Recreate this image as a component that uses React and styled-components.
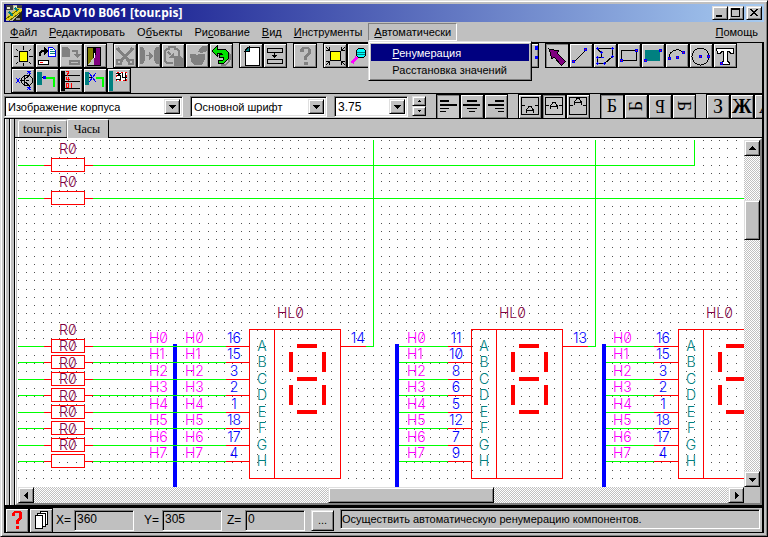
import React from "react";
import styled, { createGlobalStyle, css } from "styled-components";

const face = "#c0c0c0";
const shade = "#808080";
const uiFont = '"Liberation Sans", Arial, sans-serif';

const GlobalStyle = createGlobalStyle`
  *, *::before, *::after { box-sizing: border-box; }
  html, body, #root { height: 100%; margin: 0; }
  body { overflow: hidden; background: ${face}; }
  button, input, select { font: inherit; color: inherit; margin: 0; border-radius: 0; }
`;

const raised = css`
  border: 1px solid;
  border-color: #dfdfdf #000 #000 #dfdfdf;
  box-shadow: inset 1px 1px #fff, inset -1px -1px ${shade};
`;

const Window = styled.div`
  ${raised}
  display: flex;
  flex-direction: column;
  height: 100vh;
  padding: 3px;
  overflow: hidden;
  background: ${face};
  color: #000;
  font: 11px/16px ${uiFont};
`;

const TitleBar = styled.header`
  display: flex;
  align-items: center;
  flex: none;
  height: 18px;
  padding: 0 2px 0 2px;
  gap: 3px;
  background: linear-gradient(90deg, #000080, #a6caf0);
  color: #fff;
`;

const Title = styled.h1`
  flex: 1;
  margin: 0;
  font: bold 12px/18px "Noto Sans", "Open Sans", sans-serif;
  white-space: nowrap;
`;

const WindowButtons = styled.div`
  display: flex;
`;

const CaptionButton = styled.button`
  ${raised}
  width: 16px;
  height: 14px;
  padding: 0;
  margin-left: ${(p) => (p.$apart ? "2px" : "0")};
  background: ${face};
  color: #000;
  svg { display: block; width: 12px; height: 10px; margin: 1px; }
`;

const MenuBar = styled.nav`
  display: flex;
  flex: none;
  align-items: center;
  height: 20px;
`;

const MenuEntry = styled.div`
  position: relative;
  margin-left: ${(p) => (p.$last ? "auto" : "0")};
`;

const MenuButton = styled.button`
  display: block;
  height: 18px;
  padding: 0 5px;
  border: 1px solid;
  border-color: ${(p) => (p.$open ? "#808080 #fff #fff #808080" : "transparent")};
  background: none;
  line-height: 16px;
  white-space: nowrap;
`;

const DropDown = styled.div`
  ${raised}
  position: absolute;
  z-index: 5;
  top: 18px;
  left: 0;
  width: 164px;
  padding: 2px;
  background: ${face};
`;

const DropItem = styled.button`
  display: block;
  width: 100%;
  height: 17px;
  padding: 0 0 0 21px;
  border: 0;
  background: ${(p) => (p.$active ? "#000080" : "transparent")};
  color: ${(p) => (p.$active ? "#fff" : "#000")};
  line-height: 16px;
  text-align: left;
  white-space: nowrap;
`;

const ToolPanel = styled.div`
  flex: none;
  padding-left: 6px;
  border: 1px solid #000;
  border-right-width: 2px;
  overflow: hidden;
`;

const ToolRow = styled.div`
  display: flex;
  gap: 6px;
  height: 25px;
`;

const ToolGroup = styled.div`
  display: flex;
  flex: none;
`;

const ToolButton = styled.button`
  flex: none;
  width: 24px;
  height: 25px;
  padding: 0;
  border: 1px solid #000;
  background: ${(p) => (p.$pressed ? "#c8c8c8" : face)};
  box-shadow: ${(p) =>
    p.$pressed ? "inset 1px 1px #808080" : "inset 1px 1px #fff, inset -1px -1px #808080"};
  svg { display: block; width: 22px; height: 22px; }
`;

const FormatBar = styled.div`
  display: flex;
  flex: none;
  align-items: center;
  height: 25px;
  border-bottom: 1px solid #000;
  border-right: 2px solid #000;
  overflow: hidden;
`;

const FormatTools = styled.div`
  display: flex;
  gap: 10px;
  margin-left: 10px;
`;

const Combo = styled.div`
  display: flex;
  flex: none;
  width: ${(p) => p.$width}px;
  height: 21px;
  margin-right: ${(p) => p.$gap}px;
  border: 1px solid;
  border-color: #808080 #fff #fff #808080;
  box-shadow: inset 1px 1px #000, inset -1px -1px #dfdfdf;
  padding: 2px;
  background: #fff;
`;

const ComboSelect = styled.select`
  flex: 1;
  min-width: 0;
  padding: 0 1px;
  border: 0;
  appearance: none;
  background: #fff;
  font-size: ${(p) => (p.$numeric ? 12 : 11)}px;
  line-height: 16px;
  outline: 0;
`;

const ComboArrow = styled.span`
  ${raised}
  display: flex;
  align-items: center;
  justify-content: center;
  flex: none;
  width: 16px;
  background: ${face};
`;

const Spinner = styled.div`
  display: flex;
  flex: none;
  flex-direction: column;
  width: 14px;
`;

const SpinButton = styled.button`
  ${raised}
  display: flex;
  align-items: center;
  justify-content: center;
  height: 10px;
  padding: 0;
  background: ${face};
`;

const Workspace = styled.main`
  display: flex;
  flex: 1;
  min-height: 0;
  border-right: 2px solid #000;
  border-bottom: 3px solid #000;
`;

const Strip = styled.div`
  flex: none;
  width: 5px;
  border-left: 1px solid #000;
  box-shadow: inset 1px 0 #fff;
`;

const Document = styled.section`
  display: flex;
  flex: 1;
  flex-direction: column;
  min-width: 0;
  border-left: 1px solid #000;
`;

const TabRow = styled.div`
  display: flex;
  flex: none;
  align-items: flex-end;
  height: 19px;
  padding-left: 3px;
  border-bottom: 1px solid #000;
`;

const Tab = styled.button`
  height: ${(p) => (p.$active ? 19 : 17)}px;
  margin-bottom: ${(p) => (p.$active ? "-1px" : "0")};
  padding: 0 ${(p) => (p.$active ? 8 : 4)}px 0 ${(p) => (p.$active ? 6 : 4)}px;
  border: 1px solid;
  border-color: #fff ${(p) => (p.$active ? "#000" : "#808080")} ${face} #fff;
  border-bottom: 0;
  border-radius: 2px 2px 0 0;
  background: ${face};
  font: ${(p) => (p.$active ? 12 : 13)}px/16px "Liberation Serif", serif;
`;

const Sheet = styled.div`
  display: grid;
  flex: 1;
  grid-template: minmax(0, 1fr) 16px / minmax(0, 1fr) 16px;
  min-height: 0;
  border: 2px solid;
  border-color: #fff #808080 #808080 #fff;
  border-left: 3px double #fff;
`;

const Drawing = styled.svg`
  display: block;
  width: 100%;
  height: 100%;
  background: #fff;
  font: 300 14px/16px Inter, sans-serif;
  font-feature-settings: "zero";
`;

const ScrollBar = styled.div`
  display: flex;
  flex-direction: ${(p) => (p.$vertical ? "column" : "row")};
  background: repeating-conic-gradient(#fff 0 25%, #c0c0c0 0 50%) 0 0 / 2px 2px;
`;

const ScrollButton = styled.button`
  ${raised}
  display: flex;
  align-items: center;
  justify-content: center;
  flex: none;
  width: 16px;
  height: 16px;
  padding: 0;
  background: ${face};
`;

const Track = styled.div`
  flex: ${(p) => p.$part} 0 0;
`;

const Thumb = styled.div`
  ${raised}
  flex: ${(p) => p.$part} 0 0;
  background: ${face};
`;

const StatusBar = styled.footer`
  display: flex;
  flex: none;
  align-items: center;
  height: 25px;
  padding-right: 2px;
  border-left: 1px solid #000;
  border-bottom: 1px solid #000;
  border-right: 2px solid #000;
`;

const Coordinate = styled.div`
  display: flex;
  flex: none;
  align-items: center;
  margin-left: ${(p) => p.$gap}px;
`;

const CoordLabel = styled.label`
  width: 18px;
  line-height: 16px;
  font-size: 12px;
`;

const CoordInput = styled.input`
  width: 60px;
  height: 21px;
  padding: 0 1px 2px 2px;
  border: 1px solid;
  border-color: #808080 #fff #fff #808080;
  box-shadow: inset 1px 1px #000;
  background: ${face};
  font-size: 12px;
  outline: 0;
`;

const MoreButton = styled.button`
  ${raised}
  flex: none;
  width: 23px;
  height: 21px;
  margin-left: 6px;
  padding: 0;
  background: ${face};
`;

const Hint = styled.output`
  flex: 1;
  min-width: 0;
  height: 20px;
  margin: 0 0 2px 6px;
  padding-left: 1px;
  border: 1px solid;
  border-color: #808080 #fff #fff #808080;
  box-shadow: inset 1px 1px #000;
  overflow: hidden;
  line-height: 18px;
  white-space: nowrap;
`;

/* ---------- small glyphs ---------- */

const arrowPaths = {
  down: "M0 2h7v1h-1v1h-1v1h-1v1h-1v-1h-1v-1h-1v-1h-1z",
  up: "M3 1h1v1h1v1h1v1h1v1h-7v-1h1v-1h1v-1h1z",
  left: "M5 0v7h-1v-1h-1v-1h-1v-1h-1v-1h1v-1h1v-1h1v-1z",
  right: "M2 0v7h1v-1h1v-1h1v-1h1v-1h-1v-1h-1v-1h-1v-1z",
};

const Arrow = ({ to }) => (
  <svg width="7" height="7" viewBox="0 0 7 7" shapeRendering="crispEdges" aria-hidden="true">
    <path d={arrowPaths[to]} />
  </svg>
);

const SpinArrow = ({ up }) => (
  <svg width="3" height="2" viewBox="0 0 3 2" shapeRendering="crispEdges" aria-hidden="true">
    <path d={up ? "M1 0h1v1h1v1h-3v-1h1z" : "M0 0h3v1h-1v1h-1v-1h-1z"} />
  </svg>
);

const AppIcon = () => (
  <svg width="16" height="16" viewBox="0 0 16 16" shapeRendering="crispEdges" aria-hidden="true">
    <rect width="16" height="16" fill="#b8b8a0" />
    <path d="M0 0h7v5h-7zM11 0h5v3h-5z" fill="#404040" />
    <path d="M1 2h3v2h-3zM8 1h3v3h-3z" fill="#e8e8d0" />
    <path d="M6 16h10v-9z" fill="#202018" />
    <path d="M0 12L12 3l4 1v2L4 15H0z" fill="#e0d020" />
    <path d="M0 14L13 4M3 16L16 6" stroke="#606000" fill="none" />
    <path d="M3 7l4 4M9 3l3 3" stroke="#008080" strokeWidth="2" />
    <path d="M10 13h4v2h-4z" fill="#909090" />
  </svg>
);

const Node = ({ x, y }) => (
  <g>
    <rect x={x} y={y} width="3" height="3" fill="#00f" />
    <rect x={x + 1} y={y + 1} width="1" height="1" fill="#f00" />
  </g>
);

const line = (color, width = 1) => ({ fill: "none", stroke: color, strokeWidth: width });

const glyphs = {
  light: (
    <>
      <rect x="8.500" y="7.500" width="8" height="10" fill="#ff0" stroke="#000" />
      <path d="M12.500 2v4M12.500 19v3M3 12.500h4M18 12.500h4M5 5l2 2M20 5l-2 2M5 20l2-2M20 20l-2-2" {...line("#000")} />
    </>
  ),
  load: (
    <>
      <path d="M5 12V9l2-2h3" {...line("#000", 2)} />
      <path d="M9 3l4 4-4 4z" />
      <path d="M13.500 3.500h4l3 3v6h-7z" fill="#fff" stroke="#00f" />
      <path d="M15 5.500h3M15 7.500h5M15 9.500h5" {...line("#008080")} />
      <rect x="3.500" y="16.500" width="10" height="4" fill="#fff" stroke="#000" />
      <rect x="5" y="18" width="3" height="1" fill="#f00" />
    </>
  ),
  save: (
    <>
      <path d="M3 3h5l3 3v7h-8z" fill="#808080" />
      <path d="M13 6.500h4.500v5" {...line("#808080", 2)} />
      <path d="M14 10h8l-4 4z" fill="#808080" />
      <path d="M10 16h11v5h-11z" fill="#808080" />
      <rect x="12" y="18" width="7" height="1" fill="#c0c0c0" />
    </>
  ),
  exit: (
    <>
      <rect x="4.500" y="3.500" width="13" height="18" fill="#808000" stroke="#000" />
      <path d="M11 4h6v17h-6z" fill="#800080" />
      <path d="M10 4h3v6l-2 3v2h-1z" fill="#000" />
      <path d="M5 21l6-8v8z" fill="#c0c0c0" />
      <path d="M11.500 9v5" {...line("#fff")} />
    </>
  ),
  cut: (
    <>
      <path d="M4 4l12 13M20 4L8 17" {...line("#808080", 3)} />
      <circle cx="6" cy="18" r="2.500" {...line("#808080", 2)} />
      <circle cx="18" cy="18" r="2.500" {...line("#808080", 2)} />
    </>
  ),
  copy: (
    <>
      <path d="M3 3h3l2 4v9l-2 4h-3zM22 3h-3l-2 4v9l2 4h3z" fill="#808080" />
      <path d="M9 11.500h5" {...line("#808080")} />
      <path d="M12 8l4 4-4 4z" fill="#808080" />
    </>
  ),
  paste: (
    <>
      <path d="M12 19H6l-2-2V7l2-2h2V3h6v2h2l2 2v5" {...line("#808080", 2)} />
      <path d="M7 8l3 3" {...line("#808080", 2)} />
      <path d="M13 8v6h-6z" fill="#808080" />
      <path d="M13 12h6l3 3v7h-9z" fill="#808080" />
    </>
  ),
  remove: (
    <>
      <path d="M13 8l2-4 3-2h5v3l-3 3-4 1z" fill="#808080" />
      <path d="M5 10h5l2 1 2-1h6v5l-3 6h-8l-3-4z" fill="#808080" />
    </>
  ),
  undo: (
    <>
      <path d="M8 12h8l3 2v3l-3 3h-4v2h4l4-3 2-4v-4l-3-4-4-1" fill="#808080" />
      <path d="M3 7l5-5v3h8l3 3v7l-4 4h-6v-3h5l1-2-5-1v-3h3l-1-1h-4v3z" fill="#00e000" stroke="#000" />
    </>
  ),
  page: (
    <>
      <path d="M6 6l4-3h10v18h-14z" fill="#fff" stroke="#000" />
      <path d="M6 7l4-4v4z" fill="#008080" stroke="#000" />
    </>
  ),
  fit: (
    <>
      <rect x="4.500" y="4.500" width="15" height="4" {...line("#000")} />
      <rect x="4.500" y="15.500" width="15" height="4" {...line("#000")} />
      <path d="M11.500 9v5M9 11.500h5M10 12.500h3" {...line("#000")} />
    </>
  ),
  help: (
    <>
      <path d="M7 8V5l2-2h6l3 2v4l-4 4v3h-3v-4l4-4v-3h-4v3z" fill="#808080" />
      <rect x="11" y="18" width="4" height="3" fill="#808080" />
    </>
  ),
  extents: (
    <>
      <rect x="7.500" y="7.500" width="10" height="9" fill="#ff0" stroke="#000" />
      <path d="M3 3l4 4M22 3l-4 4M3 21l4-4M22 21l-4-4M3 6.500h3.500V3M22 6.500h-3.500V3M3 17.500h3.500V21M22 17.500h-3.500V21" {...line("#000")} />
    </>
  ),
  zoom: (
    <>
      <circle cx="14" cy="9" r="5" fill="#0ff" stroke="#000" />
      <path d="M10 8.500h8M10 10.500h8" {...line("#008080")} />
      <path d="M10 13l-5 6" {...line("#f0f", 3)} />
    </>
  ),
  flag: <path d="M20 2v4h3v-4zM20 12h3v3h-3z" fill="#00f" />,
  arrow: <path d="M4 5l10 2-2 2 8 8v1l-3 3h-1l-7-8-2 2z" fill="#800080" stroke="#000" />,
  line: (
    <>
      <path d="M5 18L17 6" {...line("#000")} />
      <Node x={3} y={16} />
      <Node x={15} y={4} />
    </>
  ),
  polygon: (
    <>
      <path d="M4 4.500h15.500v8l-8 7H4.500v-6h4l-.500-5z" {...line("#000")} />
      <path d="M3 4.500h3M4.500 3v3M18 4.500h3M19.500 3v3M18 12.500h3M19.500 11v3M7 8.500h3M8.500 7v3M3 13.500h3M4.500 12v3M8 13.500h3M3 19.500h3M4.500 18v3M10 19.500h3M11.500 18v3" {...line("#00f")} />
    </>
  ),
  rect: (
    <>
      <rect x="4.500" y="6.500" width="15" height="10" {...line("#000")} />
      <Node x={3} y={15} />
      <Node x={18} y={5} />
    </>
  ),
  fill: (
    <>
      <rect x="4" y="6" width="15" height="11" fill="#008080" />
      <Node x={3} y={15} />
      <Node x={18} y={5} />
    </>
  ),
  arc: (
    <>
      <path d="M4 14c0-6 6-9 10-8l4 2" {...line("#000")} />
      <Node x={3} y={13} />
      <Node x={11} y={12} />
      <Node x={17} y={7} />
    </>
  ),
  circle: (
    <>
      <circle cx="11.500" cy="12.500" r="8.500" {...line("#000")} />
      <Node x={10} y={11} />
      <Node x={18} y={11} />
    </>
  ),
  text: (
    <>
      <path d="M3.500 4.500h17v5h-3l-1-2h-2v10l2 1v2h-8v-2l2-1v-10h-2l-1 2h-3z" fill="#fff" stroke="#000" />
      <Node x={7} y={18} />
    </>
  ),
  transistor: (
    <>
      <circle cx="16" cy="11.500" r="5.500" {...line("#000")} />
      <path d="M9 11.500h4M13.500 7v9M14 10l4-3V4M14 13l4 3v3M15 11.500h3" {...line("#000")} />
      <path d="M5 9l4 5M9 9l-4 5M16 2l4 3M20 2l-4 3M16 18l4 3M20 18l-4 3" {...line("#00f")} />
    </>
  ),
  wire: (
    <>
      <path d="M2 3h5v13h-5z" fill="#008080" />
      <path d="M7 8.500h3" {...line("#000")} />
      <path d="M8 7h3v3h-3z" fill="#00f" />
      <path d="M11 9h8v9" {...line("#0f0", 2)} />
    </>
  ),
  numbers: (
    <>
      <rect x="2" y="2" width="4" height="20" />
      <path d="M6 6.500h15M6 12.500h15M6 19.500h15" {...line("#000")} />
      <path d="M7 2.500h2.500v2h-1v2M7.500 8v2h3M9.500 8v4M7.500 14.500h2v4h-2zM12.500 14v5" {...line("#f00")} />
    </>
  ),
  unwire: (
    <>
      <path d="M2 3h4v13h-4z" fill="#008080" />
      <path d="M6 8.500h4" {...line("#000")} />
      <path d="M13 9h7v9" {...line("#0f0", 2)} />
      <path d="M6 4l7 9M13 4l-7 9" {...line("#00f")} />
    </>
  ),
  marks: (
    <>
      <path d="M2 2h4v20h-4z" fill="#008080" />
      <rect x="9" y="3" width="11" height="9" fill="#fff" />
      <rect x="9.500" y="3.500" width="10" height="8" {...line("#f00")} strokeDasharray="2 2" />
      <path d="M9 4.500h4l-2 2h2.500v4H9M15.500 4v4H20M18.500 4v8" {...line("#000")} />
    </>
  ),
  left: <path d="M4 6h9v2h-9zM4 10h17v2h-17zM4 14h9v1h-9zM4 17h6v1h-6z" />,
  center: <path d="M7 6h10v2h-10zM3 10h17v2h-17zM7 14h10v1h-10zM9 17h6v1h-6z" />,
  right: <path d="M11 6h9v2h-9zM4 10h16v2h-16zM11 14h9v1h-9zM14 17h6v1h-6z" />,
  question: (
    <>
      <path d="M7 8V5l2-2h6l2 2v5l-3 3v3h-3v-4l3-3v-4h-4v3z" fill="#f00" />
      <rect x="11" y="18" width="3" height="3" fill="#f00" />
    </>
  ),
  pages: (
    <g fill="#fff" stroke="#000">
      <rect x="11.500" y="3.500" width="7" height="13" />
      <rect x="8.500" y="5.500" width="8" height="13" />
      <rect x="6.500" y="7.500" width="7" height="13" />
    </g>
  ),
};

const boxed = (y) => (
  <>
    <rect x="3.500" y="3.500" width="17" height="17" {...line("#000")} />
    <path d="M4 11.500h3M17 11.500h3" {...line("#000")} />
    <path d={`M8.500 ${y + 7}v-3l3-4h1l3 4v3M9 ${y + 4.5}h6`} {...line("#000")} />
  </>
);
glyphs.low = boxed(12);
glyphs.mid = boxed(8);
glyphs.high = boxed(4);

const Letter = styled.span`
  display: block;
  font: ${(p) => p.$look || "normal"} ${(p) => p.$size || 18}px/22px "Liberation Serif", serif;
  transform: rotate(${(p) => p.$turn || 0}deg);
`;

const Tool = ({ name, label, pressed, children }) => (
  <ToolButton type="button" aria-label={label} aria-pressed={pressed} $pressed={pressed}>
    {children || (
      <svg viewBox="1 1 22 22" shapeRendering="crispEdges" aria-hidden="true">
        {glyphs[name]}
      </svg>
    )}
  </ToolButton>
);

const mainTools = [
  [["light", "Создать"], ["load", "Открыть"], ["save", "Сохранить"], ["exit", "Выход"]],
  [["cut", "Вырезать"], ["copy", "Копировать"], ["paste", "Вставить"], ["remove", "Удалить"], ["undo", "Отменить"]],
  [["page", "Лист"], ["fit", "Вместить"]],
  [["help", "Справка"]],
  [
    ["extents", "Показать всё"], ["zoom", "Масштаб"], ["zoom", "Увеличить"], ["zoom", "Уменьшить"],
    ["zoom", "Окно"], ["page", "Слой"], ["page", "Сетка"], ["page", "Вид"], ["flag", "Цвет"],
  ],
  [
    ["arrow", "Выбор", true], ["line", "Линия"], ["polygon", "Полигон"], ["rect", "Прямоугольник"],
    ["fill", "Заливка"], ["arc", "Дуга"], ["circle", "Окружность"], ["text", "Текст"],
  ],
];

const wireTools = [
  ["transistor", "Компонент"], ["wire", "Провод"], ["numbers", "Шина"], ["unwire", "Разрыв"], ["marks", "Метки"],
];

/* ---------- schematic ---------- */

const green = "#00ff00";
const red = "#ff0000";
const pinRows = [206, 222, 239, 255, 272, 288, 305, 321];
const pinLetters = ["A", "B", "C", "D", "E", "F", "G", "H"];

const chips = [
  { x: 231, wireFrom: 75, pinFrom: 208, bus: 155, net: 167, pins: [16, 15, 3, 2, 1, 18, 17, 4], out: 14 },
  { x: 453, wireFrom: 381, pinFrom: 430, bus: 377, net: 389, pins: [11, 10, 8, 6, 5, 12, 7, 9], out: 13 },
  { x: 660, wireFrom: 588, pinFrom: 636, bus: 584, net: 595, pins: [16, 15, 3, 2, 1, 18, 17, 4] },
];

const Resistor = ({ y }) => (
  <g>
    <path d={`M26 ${y + 0.5}h7M67 ${y + 0.5}h8`} {...line(red)} />
    <rect x="33.5" y={y - 6.5} width="33" height="13" {...line(red)} />
  </g>
);

const Ref = ({ x, y, children }) => (
  <text x={x} y={y} fill="#800040">{children}</text>
);

const Chip = ({ x, wireFrom, pinFrom, bus, net, pins, out }) => (
  <g>
    <rect x={bus} y="204" width="4" height="2000" fill="#00f" />
    <rect x={x + 0.5} y="189.5" width="91" height="149" {...line(red)} />
    <path d={`M${x + 25.5} 190v148`} {...line(red)} />
    <Ref x={x + 28} y={178}>HL0</Ref>
    {pinRows.map((y, i) => (
      <g key={y}>
        <path d={`M${wireFrom} ${y + 0.5}H${pinFrom}`} {...line(green)} />
        <path d={`M${pinFrom} ${y + 0.5}H${x}`} {...line(red)} />
        <text x={net} y={y - 3} fill="#f0f">{`H${i}`}</text>
        <text x={x - 15} y={y - 3} fill="#00f" textAnchor="middle">{pins[i]}</text>
        <text x={x + 13} y={y + 5} fill="#008080" textAnchor="middle">{pinLetters[i]}</text>
      </g>
    ))}
    <path
      d={`M${x + 48} 204h20v4h-20zM${x + 48} 237h20v4h-20zM${x + 48} 270h20v4h-20zM${x + 40} 212h4v20h-4zM${x + 73} 212h4v20h-4zM${x + 40} 245h4v20h-4zM${x + 73} 245h4v20h-4z`}
      fill={red}
    />
    {out && (
      <>
        <path d={`M${x + 92} 206.5h25`} {...line(red)} />
        <path d={`M${x + 117} 206.5h7.5V0`} {...line(green)} />
        <text x={x + 109} y="203" fill="#00f" textAnchor="middle">{out}</text>
      </>
    )}
  </g>
);

const Schematic = () => (
  <Drawing role="img" aria-label="Схема: Часы" shapeRendering="crispEdges">
    <defs>
      <pattern id="grid" width="33" height="33" patternUnits="userSpaceOnUse">
        {[0, 8, 17, 25].map((y) => (
          <path key={y} d={`M0 ${y}h1v1h-1zM8 ${y}h1v1h-1zM16 ${y}h1v1h-1zM25 ${y}h1v1h-1z`} fill="#505050" />
        ))}
      </pattern>
    </defs>
    <rect width="100%" height="100%" fill="url(#grid)" />
    <path d="M0 25.5h26M75 25.5h601.500V0M0 58.500h26M75 58.500H4000" {...line(green)} />
    <Resistor y={25} />
    <Resistor y={58} />
    <Ref x={41} y={14}>R0</Ref>
    <Ref x={41} y={47}>R0</Ref>
    {chips.map((chip) => <Chip key={chip.x} {...chip} />)}
    {pinRows.map((y, i) => (
      <g key={y}>
        <path d={`M0 ${y + 0.5}h26`} {...line(green)} />
        <Resistor y={y} />
        <Ref x={41} y={y - 11}>R0</Ref>
        <text x="131" y={y - 3} fill="#f0f">{`H${i}`}</text>
      </g>
    ))}
  </Drawing>
);

/* ---------- page ---------- */

const menus = ["Файл", "Редактировать", "Объекты", "Рисование", "Вид", "Инструменты"];
const underlined = { Объекты: 1, Рисование: 2 };

const Label = ({ text }) => {
  const at = underlined[text] || 0;
  return (
    <>
      {text.slice(0, at)}<u>{text[at]}</u>{text.slice(at + 1)}
    </>
  );
};

const ComboBox = ({ width, gap, label, value, numeric }) => (
  <Combo $width={width} $gap={gap}>
    <ComboSelect aria-label={label} defaultValue={value} $numeric={numeric}>
      <option>{value}</option>
    </ComboSelect>
    <ComboArrow><Arrow to="down" /></ComboArrow>
  </Combo>
);

const Field = ({ id, label, value, gap }) => (
  <Coordinate $gap={gap}>
    <CoordLabel htmlFor={id}>{label}</CoordLabel>
    <CoordInput id={id} defaultValue={value} />
  </Coordinate>
);

export default function App() {
  return (
    <Window>
      <GlobalStyle />
      <TitleBar>
        <AppIcon />
        <Title>PasCAD V10 B061 [tour.pis]</Title>
        <WindowButtons>
          <CaptionButton type="button" aria-label="Свернуть">
            <svg viewBox="0 0 12 10" shapeRendering="crispEdges"><path d="M2 7h6v2h-6z" /></svg>
          </CaptionButton>
          <CaptionButton type="button" aria-label="Развернуть">
            <svg viewBox="0 0 12 10" shapeRendering="crispEdges"><path d="M1 0h9v9h-9zM2 2v6h7v-6z" fillRule="evenodd" /></svg>
          </CaptionButton>
          <CaptionButton type="button" aria-label="Закрыть" $apart>
            <svg viewBox="0 0 12 10" shapeRendering="crispEdges">
              <path d="M2 1h2v1h1v1h2v-1h1v-1h2v1h-1v1h-1v1h-1v1h1v1h1v1h1v1h-2v-1h-1v-1h-2v1h-1v1h-2v-1h1v-1h1v-1h1v-1h-1v-1h-1v-1h-1z" />
            </svg>
          </CaptionButton>
        </WindowButtons>
      </TitleBar>

      <MenuBar>
        {menus.map((m) => (
          <MenuEntry key={m}>
            <MenuButton type="button"><Label text={m} /></MenuButton>
          </MenuEntry>
        ))}
        <MenuEntry>
          <MenuButton type="button" aria-expanded="true" $open><Label text="Автоматически" /></MenuButton>
          <DropDown role="menu">
            <DropItem type="button" role="menuitem" $active><Label text="Ренумерация" /></DropItem>
            <DropItem type="button" role="menuitem">Расстановка значений</DropItem>
          </DropDown>
        </MenuEntry>
        <MenuEntry $last>
          <MenuButton type="button"><Label text="Помощь" /></MenuButton>
        </MenuEntry>
      </MenuBar>

      <ToolPanel>
        <ToolRow>
          {mainTools.map((group, g) => (
            <ToolGroup key={g}>
              {group.map(([name, label, pressed]) => (
                <Tool key={label} name={name} label={label} pressed={pressed} />
              ))}
            </ToolGroup>
          ))}
        </ToolRow>
        <ToolRow>
          <ToolGroup>
            {wireTools.map(([name, label]) => <Tool key={name} name={name} label={label} />)}
          </ToolGroup>
        </ToolRow>
      </ToolPanel>

      <FormatBar>
        <ComboBox width={179} gap={7} label="Слой" value="Изображение корпуса" />
        <ComboBox width={137} gap={7} label="Шрифт" value="Основной шрифт" />
        <ComboBox width={74} gap={4} label="Размер" value="3.75" numeric />
        <Spinner>
          <SpinButton type="button" aria-label="Больше"><SpinArrow up /></SpinButton>
          <SpinButton type="button" aria-label="Меньше"><SpinArrow /></SpinButton>
        </Spinner>
        <FormatTools>
          <ToolGroup>
            <Tool name="left" label="Влево" pressed />
            <Tool name="center" label="По центру" />
            <Tool name="right" label="Вправо" />
          </ToolGroup>
          <ToolGroup>
            <Tool name="low" label="Внизу" />
            <Tool name="mid" label="Посередине" pressed />
            <Tool name="high" label="Вверху" />
          </ToolGroup>
          <ToolGroup>
            <Tool label="Без поворота" pressed><Letter>Б</Letter></Tool>
            <Tool label="Поворот 90"><Letter $turn={-90}>Б</Letter></Tool>
            <Tool label="Поворот 180"><Letter $turn={180}>Б</Letter></Tool>
            <Tool label="Поворот 270"><Letter $turn={90}>Б</Letter></Tool>
          </ToolGroup>
          <ToolGroup>
            <Tool label="Обычный"><Letter $size={20}>З</Letter></Tool>
            <Tool label="Жирный"><Letter $size={20} $look="bold">Ж</Letter></Tool>
            <Tool label="Курсив"><Letter $size={20} $look="italic">А</Letter></Tool>
          </ToolGroup>
        </FormatTools>
      </FormatBar>

      <Workspace>
        <Strip />
        <Strip />
        <Document>
          <TabRow role="tablist">
            <Tab type="button" role="tab" aria-selected="false">tour.pis</Tab>
            <Tab type="button" role="tab" aria-selected="true" $active>Часы</Tab>
          </TabRow>
          <Sheet>
            <Schematic />
            <ScrollBar $vertical>
              <ScrollButton type="button" aria-label="Вверх"><Arrow to="up" /></ScrollButton>
              <Track $part={44} />
              <Thumb $part={39} />
              <Track $part={232} />
              <ScrollButton type="button" aria-label="Вниз"><Arrow to="down" /></ScrollButton>
            </ScrollBar>
            <ScrollBar>
              <ScrollButton type="button" aria-label="Левее"><Arrow to="left" /></ScrollButton>
              <Track $part={295} />
              <Thumb $part={164} />
              <Track $part={235} />
              <ScrollButton type="button" aria-label="Правее"><Arrow to="right" /></ScrollButton>
            </ScrollBar>
          </Sheet>
        </Document>
      </Workspace>

      <StatusBar>
        <Tool name="question" label="Помощь" />
        <Tool name="pages" label="Листы" />
        <Field id="coord-x" label="X=" value="360" gap={3} />
        <Field id="coord-y" label="Y=" value="305" gap={10} />
        <Field id="coord-z" label="Z=" value="0" gap={5} />
        <MoreButton type="button" aria-label="Дополнительно">...</MoreButton>
        <Hint>Осуществить автоматическую ренумерацию компонентов.</Hint>
      </StatusBar>
    </Window>
  );
}
